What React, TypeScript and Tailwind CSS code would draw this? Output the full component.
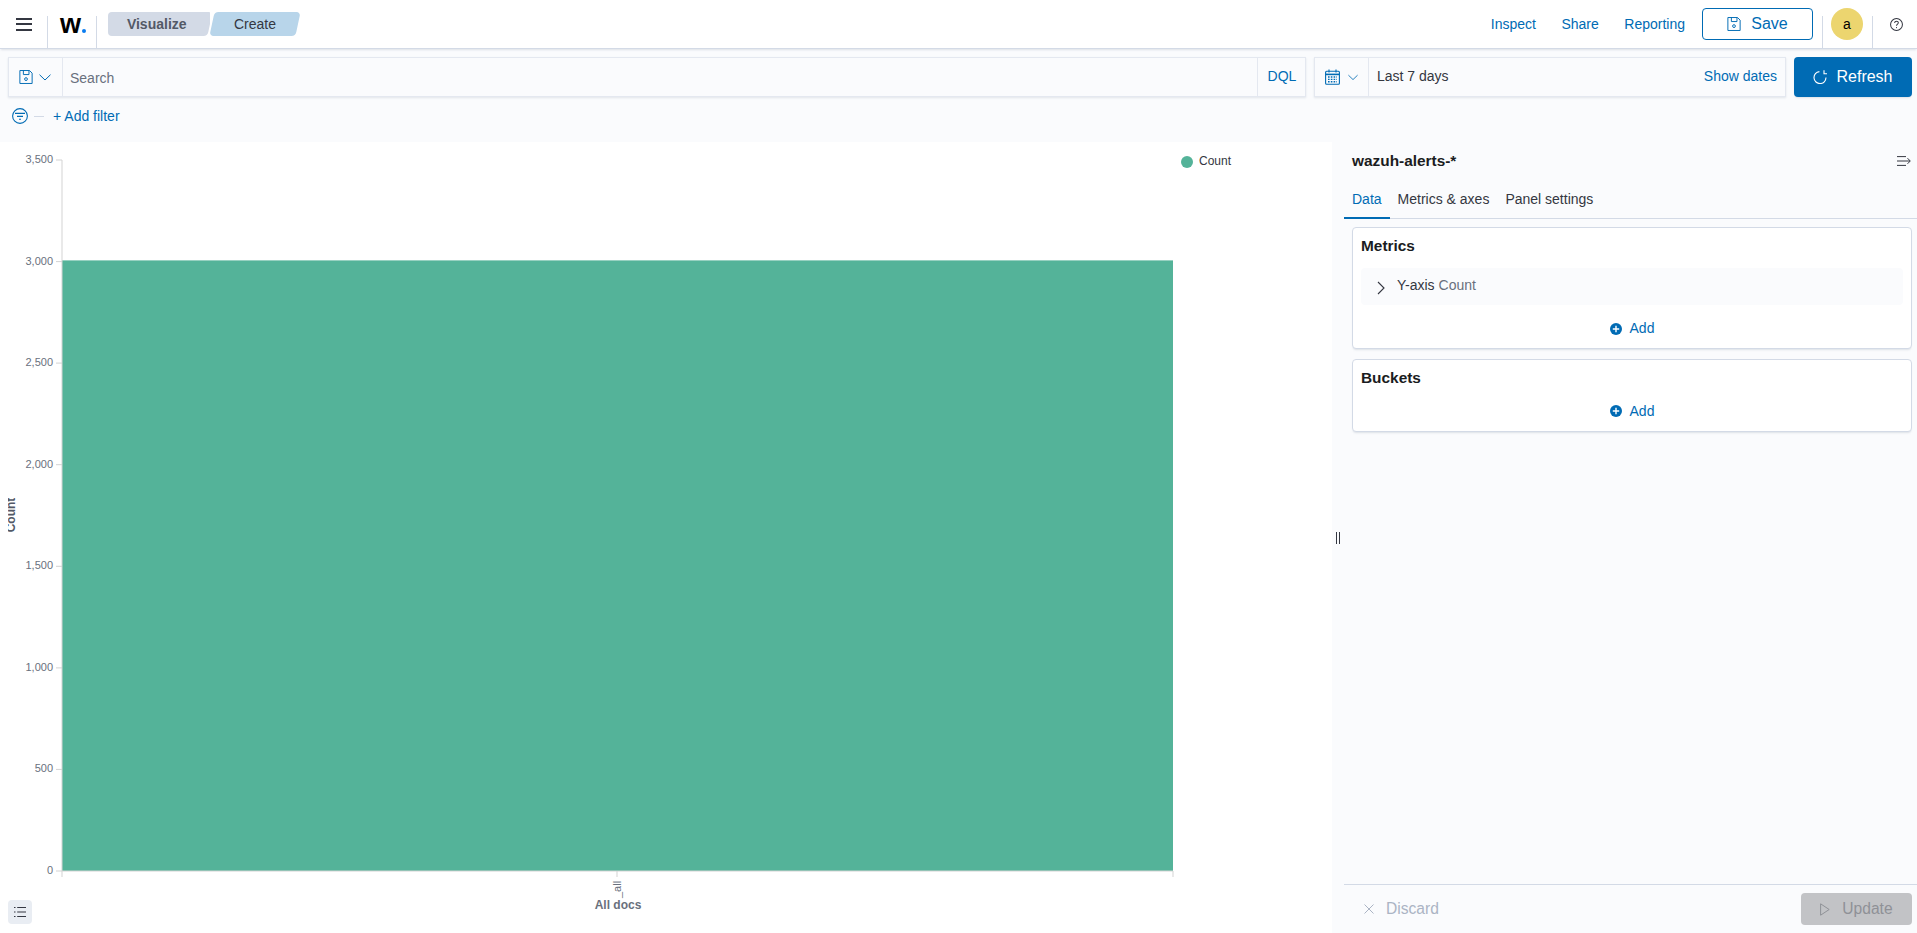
import React from 'react';

const Divider = () => <div className="h-[32px] w-px self-end bg-[#d3dae6]" />;

const FloppyIcon = ({ size = 14 }: { size?: number }) => (
  <svg width={size} height={size} viewBox="0 0 16 16" fill="none" stroke="currentColor" strokeWidth="1.1">
    <path d="M1 .6h11l3 3v11.8H1z" />
    <path d="M5 .6v4.6h6.4V.6" />
    <circle cx="8" cy="10.4" r="1.6" />
  </svg>
);

const Chevron = ({ w = 12 }: { w?: number }) => (
  <svg width={w} height="7" viewBox="0 0 12 7" fill="none" stroke="currentColor" strokeWidth="1">
    <path d="M.5.7 6 6l5.5-5.3" />
  </svg>
);

const CalendarIcon = () => (
  <svg width="15" height="16" viewBox="0 0 15 16" fill="none" stroke="currentColor" strokeWidth="1.1">
    <rect x=".6" y="2.2" width="13.8" height="13" rx="1" />
    <path d="M.6 5.4h13.8" strokeWidth="1.6" />
    <path d="M4 .4v3M11 .4v3" />
    <path d="M3 8h9M3 10.4h9M3 12.8h9" strokeWidth="1.4" strokeDasharray="1.6 1.2" />
  </svg>
);

const RefreshIcon = () => (
  <svg width="14" height="14" viewBox="0 0 14 14" fill="none" stroke="currentColor" strokeWidth="1.1">
    <path d="M13 7.6A6 6 0 1 1 6.4 1.6" />
    <path d="M11 .2v3.6h3" />
  </svg>
);

const FilterIcon = () => (
  <svg width="16" height="16" viewBox="0 0 16 16" fill="none" stroke="currentColor" strokeWidth="1.1">
    <circle cx="8" cy="8" r="7.4" />
    <path d="M3 5.4h10M5 8.4h6M7 11.2h2" />
  </svg>
);

const AddIcon = () => (
  <svg width="12" height="12" viewBox="0 0 12 12">
    <circle cx="6" cy="6" r="6" fill="#006bb4" />
    <path d="M2.8 6h6.4M6 2.8v6.4" stroke="#fff" strokeWidth="1.4" />
  </svg>
);

const AddButton = () => (
  <div className="flex items-center justify-center gap-[8px] text-[14px] text-[#006bb4]">
    <AddIcon />
    <span>Add</span>
  </div>
);

const yTicks = [
  { label: '3,500', y: 160 },
  { label: '3,000', y: 261.6 },
  { label: '2,500', y: 363.1 },
  { label: '2,000', y: 464.7 },
  { label: '1,500', y: 566.3 },
  { label: '1,000', y: 667.9 },
  { label: '500', y: 769.4 },
  { label: '0', y: 871 },
];

// chart area starts 142px down the page
const OFFSET = 142;

const Chart = () => (
  <svg width="1332" height="791" className="block">
    <defs>
      <clipPath id="axis-title">
        <rect x="8" y="300" width="20" height="150" />
      </clipPath>
    </defs>
    <rect x="62" y={260.4 - OFFSET} width="1111" height={871 - 260.4} fill="#54b399" />
    <path d={`M62 ${160 - OFFSET}V${871 - OFFSET}H1173`} fill="none" stroke="#d3d3d3" />
    {yTicks.map((t) => (
      <g key={t.label}>
        <path d={`M56 ${t.y - OFFSET}H62`} stroke="#d3d3d3" />
        <text x="53" y={t.y - OFFSET + 3} textAnchor="end" fontSize="11" fill="#69707d">
          {t.label}
        </text>
      </g>
    ))}
    {[62, 617, 1173].map((x) => (
      <path key={x} d={`M${x} ${871 - OFFSET}v6`} stroke="#d3d3d3" />
    ))}
    <text transform={`translate(621 ${898 - OFFSET}) rotate(-90)`} fontSize="11" fill="#69707d">
      _all
    </text>
    <text x="618" y={909 - OFFSET} textAnchor="middle" fontSize="12" fontWeight="700" fill="#69707d">
      All docs
    </text>
    <g clipPath="url(#axis-title)">
      <text transform="translate(15 373) rotate(-90)" textAnchor="middle" fontSize="12" fontWeight="700" fill="#535966">
        Count
      </text>
    </g>
    <circle cx="1187" cy={162 - OFFSET} r="6" fill="#54b399" />
    <text x="1199" y={165 - OFFSET} fontSize="12" fill="#343741">
      Count
    </text>
  </svg>
);

const App = () => {
  return (
    <div className="flex h-screen flex-col overflow-hidden bg-[#fafbfd] font-['Liberation_Sans',Arial,sans-serif] text-[14px] text-[#343741]">
      {/* top nav */}
      <header className="relative z-10 flex h-[49px] items-center border-b border-[#d3dae6] bg-white pr-[14px] shadow-[0_2px_2px_-1px_rgba(152,162,179,0.3)]">
        <div className="flex w-[47px] justify-center">
          <div className="flex w-[16px] flex-col gap-[3.5px]">
            <div className="h-[2px] bg-[#343741]" />
            <div className="h-[2px] bg-[#343741]" />
            <div className="h-[2px] bg-[#343741]" />
          </div>
        </div>
        <Divider />
        <div className="flex w-[48px] items-baseline pl-[12px]">
          <span className="text-[27px] font-bold leading-[30px] text-black">w</span>
          <span className="ml-[0.5px] h-[4px] w-[4px] rounded-full bg-[#0a7cf0]" />
        </div>
        <Divider />
        <nav className="ml-[11px] flex items-center gap-[2px]">
          <div className="h-[24px] w-[102px] overflow-hidden rounded-l-[4px]">
            <div className="ml-[-10px] flex h-full w-[112px] -skew-x-[12deg] items-center justify-center rounded-[4px] bg-[#d3dae6] pl-[6px]">
              <span className="skew-x-[12deg] font-bold text-[#535966]">Visualize</span>
            </div>
          </div>
          <div className="flex h-[24px] w-[86px] -skew-x-[12deg] items-center justify-center rounded-[4px] bg-[#b8d5ea]">
            <span className="skew-x-[12deg]">Create</span>
          </div>
        </nav>
        <div className="ml-auto flex items-center gap-[25.5px] text-[#006bb4]">
          <span>Inspect</span>
          <span>Share</span>
          <span>Reporting</span>
        </div>
        <button className="ml-[17px] flex h-[32px] w-[111px] items-center justify-center gap-[10px] rounded-[4px] border border-[#006bb4] text-[16px] text-[#006bb4]">
          <FloppyIcon />
          <span>Save</span>
        </button>
        <div className="ml-[9px] flex h-full items-end">
          <Divider />
        </div>
        <div className="ml-[8px] flex h-[32px] w-[32px] items-center justify-center rounded-full bg-[#ecd56f] text-black">a</div>
        <div className="ml-[9px] flex h-full items-end">
          <Divider />
        </div>
        <svg className="ml-[17px]" width="13" height="13" viewBox="0 0 14 14" fill="none" stroke="#343741" strokeWidth="1.1">
          <circle cx="7" cy="7" r="6.4" />
          <path d="M5 5.4C5 4 6 3.4 7 3.4s2 .7 2 1.8C9 6.6 7 6.6 7 8.4" />
          <path d="M7 9.8v1.1" />
        </svg>
      </header>

      {/* query bar */}
      <div className="flex gap-[8px] pl-[8px] pr-[5px] pt-[8px]">
        <div className="flex h-[40px] min-w-0 flex-1 items-center border border-[#e4e8f0] bg-[#fafbfd] shadow-[0_1px_2px_rgba(152,162,179,0.25)]">
          <div className="flex h-full w-[54px] shrink-0 items-center gap-[6px] border-r border-[#e4e8f0] pl-[10px] text-[#006bb4]">
            <FloppyIcon />
            <Chevron />
          </div>
          <span className="flex-1 pl-[7px] pt-[2px] text-[#69707d]">Search</span>
          <div className="flex h-full w-[48px] items-center justify-center border-l border-[#e4e8f0] pb-[1px] pl-[1px] text-[#006bb4]">DQL</div>
        </div>
        <div className="flex h-[40px] w-[472px] items-center border border-[#e4e8f0] bg-[#fafbfd] shadow-[0_1px_2px_rgba(152,162,179,0.25)]">
          <div className="flex h-full w-[54px] shrink-0 items-center gap-[8px] border-r border-[#e4e8f0] pl-[10px] text-[#006bb4]">
            <CalendarIcon />
            <Chevron w={10} />
          </div>
          <span className="pb-[1px] pl-[8px]">Last 7 days</span>
          <span className="ml-auto pb-[1px] pr-[8px] text-[#006bb4]">Show dates</span>
        </div>
        <button className="flex h-[40px] w-[118px] items-center justify-center gap-[9px] rounded-[4px] bg-[#006bb4] text-[16px] text-white shadow-[0_2px_2px_-1px_rgba(152,162,179,0.3)]">
          <RefreshIcon />
          <span>Refresh</span>
        </button>
      </div>

      {/* filter row */}
      <div className="flex h-[45px] items-center pb-[7px] pl-[12px] text-[#006bb4]">
        <FilterIcon />
        <div className="ml-[6px] h-px w-[10px] bg-[#d3dae6]" />
        <span className="ml-[9px]">+ Add filter</span>
      </div>

      <main className="flex min-h-0 flex-1">
        <section className="relative w-[1332px] shrink-0 overflow-hidden bg-white">
          <Chart />
          <button className="absolute bottom-[9px] left-[8px] flex h-[24px] w-[24px] items-center justify-center rounded-[4px] bg-[#e9edf3]">
            <svg width="12" height="12" viewBox="0 0 12 12" fill="none" stroke="#343741" strokeWidth="1.1">
              <path d="M0 1.5h1.5M3.2 1.5H12M0 6h1.5M3.2 6H12M0 10.5h1.5M3.2 10.5H12" />
            </svg>
          </button>
        </section>

        <aside className="relative flex min-w-0 flex-1 flex-col pl-[12px]">
          <div className="absolute left-[4px] top-[390px] flex h-[12px] gap-[2px]">
            <div className="w-px bg-[#343741]" />
            <div className="w-px bg-[#343741]" />
          </div>
          <div className="mb-[2px] flex h-[37px] items-center justify-between pl-[8px] pr-[6px]">
            <h2 className="text-[15.4px] font-bold text-[#1a1c21]">wazuh-alerts-*</h2>
            <svg width="14" height="10" viewBox="0 0 14 10" fill="none" stroke="#343741" strokeWidth="1">
              <path d="M0 .6h9M0 5h13M0 9.4h9M10.5 2.2l2.8 2.8-2.8 2.8" />
            </svg>
          </div>
          <div className="flex h-[38px] border-b border-[#d3dae6]">
            <div className="mb-[-1px] flex items-center border-b-2 border-[#006bb4] px-[8px] text-[#006bb4]">Data</div>
            <div className="flex items-center px-[8px]">Metrics &amp; axes</div>
            <div className="flex items-center px-[8px]">Panel settings</div>
          </div>

          <div className="flex flex-1 flex-col gap-[10px] pl-[8px] pr-[5px] pt-[8px]">
            <div className="flex h-[122px] flex-col rounded-[4px] border border-[#d3dae6] bg-white px-[8px] shadow-[0_2px_2px_-1px_rgba(152,162,179,0.3)]">
              <h3 className="flex h-[36px] items-center text-[15.4px] font-bold text-[#1a1c21]">Metrics</h3>
              <div className="mt-[4px] flex h-[37px] items-center rounded-[4px] bg-[#fafbfd] pl-[16px]">
                <svg width="8" height="14" viewBox="0 0 8 14" fill="none" stroke="#343741" strokeWidth="1.1" className="mt-[2px]">
                  <path d="M1 1l6 6-6 6" />
                </svg>
                <span className="ml-[12px] pb-[2px]">
                  Y-axis <span className="text-[#69707d]">Count</span>
                </span>
              </div>
              <div className="flex flex-1 items-center justify-center pt-[4px]">
                <AddButton />
              </div>
            </div>
            <div className="flex h-[73px] flex-col rounded-[4px] border border-[#d3dae6] bg-white px-[8px] shadow-[0_2px_2px_-1px_rgba(152,162,179,0.3)]">
              <h3 className="flex h-[36px] items-center text-[15.4px] font-bold text-[#1a1c21]">Buckets</h3>
              <div className="flex flex-1 items-center justify-center pb-[5px]">
                <AddButton />
              </div>
            </div>
          </div>

          <div className="flex h-[49px] items-center justify-between border-t border-[#d3dae6] pl-[20px] pr-[5px]">
            <div className="flex items-center gap-[12px] text-[15.6px] text-[#abb4c4]">
              <svg width="10" height="10" viewBox="0 0 10 10" fill="none" stroke="currentColor" strokeWidth="1">
                <path d="M.5.5l9 9M9.5.5l-9 9" />
              </svg>
              <span>Discard</span>
            </div>
            <button className="flex h-[32px] w-[111px] items-center justify-center gap-[12px] rounded-[4px] bg-[#c2c3c6] text-[15.6px] text-[#8f9197]">
              <svg width="10" height="13" viewBox="0 0 10 13" fill="none" stroke="currentColor" strokeWidth="1">
                <path d="M.6.8 9.2 6.5.6 12.2z" />
              </svg>
              <span>Update</span>
            </button>
          </div>
        </aside>
      </main>
    </div>
  );
};

export default App;
